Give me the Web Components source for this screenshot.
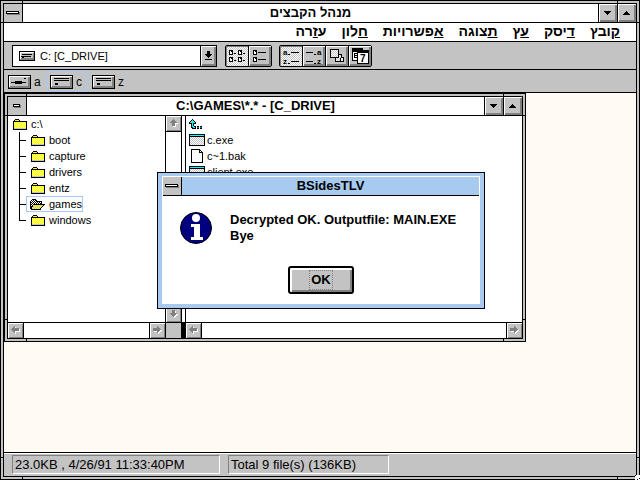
<!DOCTYPE html>
<html lang="he">
<head>
<meta charset="utf-8">
<title>מנהל הקבצים</title>
<style>
  html, body { margin: 0; height: 100%; overflow: hidden; }
  body {
    --face: #c3c3c3; --shade: #808080; --light: #fff; --accent: #a6caf0; --desk: #fffaf3;
    font: 11px/16px "Liberation Sans", Arial, sans-serif; color: #000; background: #fff;
  }
</style>
</head>
<body>
<file-manager></file-manager>
<script>
const PALETTE = { '#': '#000', Y: '#ff0', L: '#ffff80', W: '#fff', g: '#c3c3c3', s: '#808080', c: '#0ff', n: '#000080', t: '#008080', _: 'none' };
const folderFill = (a, b) => '#' + (a + b).repeat(6) + '#';
const ART = {
  folder: ['', '..####', '.#YYYY#', '##############', folderFill('L', 'Y'), folderFill('Y', 'L'), folderFill('L', 'Y'),
    folderFill('Y', 'L'), folderFill('L', 'Y'), folderFill('Y', 'L'), '#gggggggggggg#', '##############'],
  openFolder: ['', '..####', '.#W#W##', '#W#W#W######', '##W#W#W#W#W#', '#W#W#W#W#W##', '##W############', '#W#YgYgYgYgYg#',
    '###gYgYgYgYg#', '##YgYgYgYgY#', '##gYgYgYgY#', '.##########'],
  app: ['################', '#cccccccccccccc#', '################', '#WgWgWgWgWgWgWg#', '#gWgWgWgWgWgWgW#', '#WgWgWgWgWgWgWg#',
    '#gWgWgWgWgWgWgW#', '#WgWgWgWgWgWgWg#', '#gWgWgWgWgWgWgW#', '#WgWgWgWgWgWgWg#', '#gWgWgWgWgWgWgW#', '################'],
  page: ['#########', '#WWWWWWW##', '#WWWWWWW#W#', '#WWWWWWW####', '#WWWWWWWWWW#', '#WWWWWWWWWW#', '#WWWWWWWWWW#', '#WWWWWWWWWW#',
    '#WWWWWWWWWW#', '#WWWWWWWWWW#', '#WWWWWWWWWW#', '#WWWWWWWWWW#', '#WWWWWWWWWW#', '############'],
  up: ['...#', '..#c#', '.#ccc#', '#ccccc#', '###c###', '..#c#', '..#c#', '..#cc##.##.##', '..##cc#.tt.tt', '...####.##.##'],
  disk: ['################', '#WWWWWWWWWWWWWW#', '#Wggggggggggggs#', '#Wg##########gs#', '#Wggggggggggggs#', '#W##########ggs#', '#Wg##gggggggggs#', '#Wsssssssssssss#', '#ssssssssssssss#', '################'],
  hard: ['#######################', '#WWWWWWWWWWWWWWWWWWWWW#', '#Wggggggggggggggggggss#', '#Wgg###############gss#', '#Wggggggggggggggggggss#',
    '#Wgg###############gss#', '#Wggggggggggggggggggss#', '#Wggggggggggggggggggss#', '#Wggg###ggggggggggggss#', '#Wggg###ggggggggggggss#',
    '#Wggggggggggggggggggss#', '#Wssssssssssssssssssss#', '#sssssssssssssssssssss#', '#######################'],
  floppy: ['#######################', '#WWWWWWWWWWWWWWWWWWWWW#', '#Wggggggggggggggggggss#', '#Wgggggggggggggg##ggss#', '#Wggggggggggggggggggss#',
    '#Wggggggggggggggggggss#', '#Wggggg#######ggggggss#', '#Wg###############ggss#', '#Wggggg#######ggggggss#', '#Wggggggggggggggggggss#',
    '#Wggggggggggggggggggss#', '#Wssssssssssssssssssss#', '#sssssssssssssssssssss#', '#######################'],
  wideBar: ['#############', '#WWWWWWWWWWW#s', '#############s', '.sssssssssssss'],
  shortBar: ['#######', '#WWWWW#s', '#######s', '.sssssss'],
  down: ['#######_', '.#####', '..###', '...#'],
  upTri: ['...#', '..###', '.#####', '#######_'],
  drop: ['..###', '..###', '..###', '#######', '.#####', '..###', '...#', '', '#######', ''],
  names: ['####.....####', '#W##.....#W##', '#WW#.....#WW#', '#WW#.##..#WW#.##', '####.....####', '', '', '####.....####', '#W##.....#W##', '#WW#.....#WW#', '#WW#.##..#WW#.##', '####.....####'],
  details: ['####', '#W##', '#WW#.########_', '#WW#', '####', '', '', '####', '#W##', '#WW#.########', '#WW#', '####'],
  squares: ['#########', '#WgWgWgW#', '#gWgWgWg#', '#WgWgWgW#', '#gWgWgWg#', '#WgWgWgW####', '#gWgWgWg#Wg#', '#WgWgWgW#gW#', '#########Wg###',
    '.....#WgWg#WW#', '.....#gWgW#WW#', '.....#WgWg#WW#', '.....#########', ''],
  arrowLeft: ['...s', '..ssW', '.sssssss_', 'ssssssssW', '.sssssssW', '..ssWWWWW', '...sW', '....W', ''],
  arrowRight: ['....s', '....ss', 'sssssss__', 'ssssssss', 'sssssssWW', '.WWWssWW', '....sWW', '.....W', ''],
  arrowUp: ['....s', '...sss', '..sssss', '.sssssss_', '...sssWWW', '...sssW', '...sssW', '....WWW', ''],
  arrowDown: ['...sss', '...sssW', '...sssW', '.sssssss_', '..sssssWW', '...sssWW', '....sWW', '.....W', ''],
};

function define(name, html, setup) {
  const tpl = document.createElement('template');
  tpl.innerHTML = html;
  customElements.define(name, class extends HTMLElement {
    constructor() {
      super();
      this.attachShadow({ mode: 'open' }).append(tpl.content.cloneNode(true));
    }
    connectedCallback() { if (setup) setup(this, this.shadowRoot); }
  });
}

/* Small icon painted cell by cell from the ART table. */
define('pixel-icon', `<style>:host{display:block;flex:none}svg{display:block}</style>`, (el, root) => {
  const rows = ART[el.getAttribute('name')];
  const w = Math.max(...rows.map(r => r.length));
  let out = '';
  rows.forEach((row, y) => {
    for (const m of row.matchAll(/([^.])\1*/g))
      out += `<rect x="${m.index}" y="${y}" width="${m[0].length}" height="1" fill="${PALETTE[m[1]]}"/>`;
  });
  const box = document.createElement('div');
  box.innerHTML = `<svg width="${w}" height="${rows.length}" shape-rendering="crispEdges" aria-hidden="true">${out}</svg>`;
  root.append(box);
});

/* Resizable window frame with corner notches. */
define('window-frame', `<style>
  :host{display:block;box-sizing:border-box;border:1px solid #000;padding:2px;
    background:linear-gradient(#000,#000) 0 21px/100% 1px no-repeat,
      linear-gradient(#000,#000) 0 calc(100% - 21px)/100% 1px no-repeat,
      linear-gradient(#000,#000) 21px 0/1px 100% no-repeat,
      linear-gradient(#000,#000) calc(100% - 21px) 0/1px 100% no-repeat, var(--face)}
  .in{display:flex;flex-direction:column;box-sizing:border-box;height:100%;border:1px solid #000;background:#fff}
</style><div class="in"><slot></slot></div>`);

define('bevel-button', `<style>
  :host{display:block;box-sizing:border-box;flex:none}
  button{display:grid;place-items:center;width:100%;height:100%;padding:0;border:0;font:inherit;color:inherit;background:var(--face);
    box-shadow:inset 1px 1px var(--light),inset -1px -1px var(--shade),inset -2px -2px var(--edge,var(--shade))}
  :host([flat]) button{box-shadow:none}
  :host([thin]){--edge:transparent}
  :host([pressed]) button{box-shadow:inset 1px 1px var(--shade);
    background:repeating-conic-gradient(#fff 0 25%,var(--face) 0 50%) 0 0/2px 2px}
</style><button type="button"><slot></slot></button>`, (el, root) => {
  root.querySelector('button').setAttribute('aria-label', el.getAttribute('label') || '');
});

define('title-bar', `<style>
  :host{display:flex;flex:none;height:18px;border-bottom:1px solid #000;background:var(--caption,#fff);font-size:13px;line-height:18px;font-weight:bold}
  bevel-button{width:18px}
  .menu{width:19px;border-right:1px solid #000}
  .sized{width:19px;border-left:1px solid #000}
  h1{flex:1;margin:0;font:inherit;text-align:center;white-space:nowrap}
  :host([dialog]) .sized{display:none}
</style>
<bevel-button class="menu" flat label="Control menu"><slot name="mark"></slot></bevel-button>
<h1><slot></slot></h1>
<bevel-button class="sized" label="Minimize"><pixel-icon name="down"></pixel-icon></bevel-button>
<bevel-button class="sized" label="Maximize"><pixel-icon name="upTri"></pixel-icon></bevel-button>`);

define('menu-bar', `<style>
  :host{display:block;flex:none;border-bottom:1px solid #000;background:#fff}
  nav{display:flex;align-items:flex-start;direction:rtl;gap:15px;height:18px;padding:0 16px}
  button{border:0;padding:0;background:none;font:bold 14px/16px "Liberation Sans",Arial,sans-serif;color:inherit}
</style>
<nav><button><u>ק</u>ובץ</button><button><u>ד</u>יסק</button><button><u>ע</u>ץ</button><button><u>ת</u>צוגה</button><button><u>א</u>פשרויות</button><button><u>ח</u>לון</button><button>ע<u>ז</u>רה</button></nav>`);

define('tool-bar', `<style>
  :host{display:flex;flex:none;align-items:center;height:27px;padding:0 8px;border-bottom:1px solid #000;background:var(--face)}
  .combo{display:flex;align-items:center;box-sizing:border-box;width:205px;height:22px;border:1px solid #000;background:#fff;padding-left:6px;margin-right:8px}
  select{flex:1;min-width:0;appearance:none;border:0;padding:0 0 0 5px;background:none;font:11px/18px "Liberation Sans",Arial,sans-serif;color:inherit;height:20px}
  .combo bevel-button{width:16px;height:20px;border-left:1px solid #000}
  .group{display:flex;border:1px solid #000;border-radius:2px;margin-right:7px}
  .group bevel-button{width:22px;height:20px}
  .group bevel-button + bevel-button{width:23px;border-left:1px solid #000}
  svg{display:block}
  text{font:bold 8px "Liberation Sans",Arial,sans-serif}
</style>
<div class="combo"><pixel-icon name="disk"></pixel-icon>
  <select aria-label="Drive"><option>C: [C_DRIVE]</option></select>
  <bevel-button label="Open drive list"><pixel-icon name="drop"></pixel-icon></bevel-button></div>
<div class="group">
  <bevel-button pressed label="Names"><pixel-icon name="names"></pixel-icon></bevel-button>
  <bevel-button label="Details"><pixel-icon name="details"></pixel-icon></bevel-button></div>
<div class="group">
  <bevel-button pressed label="Sort by name"><svg width="16" height="20"><text x="0" y="9">a</text><text x="0" y="18">z</text><path d="M5 8h2v1h-2zM8 6h8v1h-8zM5 17h2v1h-2zM8 15h8v1h-8z"/></svg></bevel-button>
  <bevel-button label="Sort by type"><svg width="16" height="20"><text x="11" y="9">a</text><text x="11" y="18">z</text><path d="M0 6h7v1h-7zM8 8h2v1h-2zM0 15h7v1h-7zM8 17h2v1h-2z"/></svg></bevel-button>
  <bevel-button label="Sort by size"><pixel-icon name="squares"></pixel-icon></bevel-button>
  <bevel-button label="Sort by date"><svg width="17" height="16" shape-rendering="crispEdges"><path d="M0 0h11v13H0z"/><path d="M1 4h5v8H1z" fill="#fff"/><path d="M2 5h3v1H3v1h2v1H3v1h2v1H2z"/><path d="M5 2h12v14H5z"/><path d="M6 5h10v10H6z" fill="#fff"/><text x="8" y="14" style="font-size:10px;font-weight:bold">7</text></svg></bevel-button></div>`);

define('drive-bar', `<style>
  :host{display:flex;flex:none;height:22px;border-bottom:1px solid #000;background:var(--face);padding-left:1px}
  button{display:flex;align-items:center;gap:3px;box-sizing:border-box;height:21px;width:42px;margin-top:1px;padding:0 2px;border:1px solid transparent;background:none;font:12px/16px "Liberation Sans",Arial,sans-serif;color:inherit}
  button.on{width:41px;margin-right:1px;border-color:var(--accent)}
</style>
<button><pixel-icon name="floppy"></pixel-icon>a</button><button class="on"><pixel-icon name="hard"></pixel-icon>c</button><button><pixel-icon name="hard"></pixel-icon>z</button>`);

define('scroll-bar', `<style>
  :host{display:flex;justify-content:space-between;background:#fff}
  :host([vertical]){flex-direction:column}
  bevel-button{width:16px;height:15px}
  .a{border-right:1px solid #000}.b{border-left:1px solid #000}
  :host([vertical]) bevel-button{width:15px;height:16px;border:0 solid #000}
  :host([vertical]) .a{border-bottom-width:1px}
  :host([vertical]) .b{border-top-width:1px}
</style><bevel-button thin class="a" label="Scroll back"></bevel-button><bevel-button thin class="b" label="Scroll forward"></bevel-button>`,
(el, root) => {
  const names = el.hasAttribute('vertical') ? ['arrowUp', 'arrowDown'] : ['arrowLeft', 'arrowRight'];
  root.querySelectorAll('bevel-button').forEach((b, i) => { b.innerHTML = `<pixel-icon name="${names[i]}"></pixel-icon>`; });
});

define('folder-tree', `<style>
  :host{display:block;overflow:hidden;padding:0 0 0 5px}
  ul{list-style:none;margin:0;padding:0 0 0 6px}
  .row{display:flex;align-items:center;height:16px}
  .row pixel-icon{width:15px}
  .name{padding-left:3px}
  li{display:flex;align-items:center;height:16px;
    background:linear-gradient(#000,#000) 0 0/1px 100% no-repeat,linear-gradient(#000,#000) 0 8px/7px 1px no-repeat}
  li:last-child{background-size:1px 8px,7px 1px}
  li .row{box-sizing:border-box;margin-left:7px;padding-left:4px;border:1px solid transparent}
  li .on{border-color:var(--accent)}
  li .on pixel-icon{margin-left:-1px;padding-right:1px}
</style>
<div class="row"><pixel-icon name="folder"></pixel-icon><span class="name">c:\\</span></div>
<ul>${['boot', 'capture', 'drivers', 'entz', 'games', 'windows'].map(n => `<li><div class="row${n === 'games' ? ' on' : ''}"><pixel-icon name="${n === 'games' ? 'openFolder' : 'folder'}"></pixel-icon><span class="name">${n}</span></div></li>`).join('')}</ul>`);

define('file-list', `<style>
  :host{display:block;overflow:hidden;padding:0 0 0 3px}
  ul{list-style:none;margin:0;padding:0}
  li{display:flex;align-items:center;height:16px}
  .icon{display:grid;justify-content:center;width:16px}
  li:first-child .icon{justify-content:start}
  .name{padding-left:2px}
</style>
<ul><li><span class="icon"><pixel-icon name="up"></pixel-icon></span></li>
<li><span class="icon"><pixel-icon name="app"></pixel-icon></span><span class="name">c.exe</span></li>
<li><span class="icon"><pixel-icon name="page"></pixel-icon></span><span class="name">c~1.bak</span></li>
<li><span class="icon"><pixel-icon name="app"></pixel-icon></span><span class="name">client.exe</span></li></ul>`);

define('directory-panes', `<style>
  :host{display:grid;flex:1;min-height:0;grid-template:1fr 16px / 157px 16px 5px 1fr}
  .v{border-left:1px solid #000}
  .split{border:solid #000;border-width:0 1px}
  .h,.corner,.knob{border-top:1px solid #000}
  .corner{border-left:1px solid #000;background:var(--face)}
  .knob{background:#000}
</style>
<folder-tree></folder-tree><scroll-bar class="v" vertical></scroll-bar><div class="split"></div><file-list></file-list>
<scroll-bar class="h"></scroll-bar><div class="corner"></div><div class="knob"></div><scroll-bar class="h"></scroll-bar>`);

define('status-bar', `<style>
  :host{display:flex;flex:none;gap:8px;padding:1px 8px 2px;border-top:1px solid #000;box-shadow:inset 0 1px #fff;background:var(--face);font-size:13px}
  output{box-sizing:border-box;height:19px;margin-top:1px;padding:0 2px;line-height:17px;border:1px solid;border-color:var(--shade) #fff #fff var(--shade);white-space:nowrap}
  .file{width:208px}.total{width:161px}
</style><output class="file">23.0KB , 4/26/91 11:33:40PM</output><output class="total">Total 9 file(s) (136KB)</output>`);

define('message-box', `<style>
  :host{display:block;box-sizing:border-box;border:1px solid #000;padding:3px 4px 4px;background:var(--accent);font-weight:bold;font-size:13px}
  .in{background:#fff;height:100%;box-sizing:border-box;padding:1px 1px 0}
  title-bar{--caption:var(--accent)}
  .body{display:flex;gap:18px;padding:16px 17px 0}
  p{margin:0;line-height:16px}
  .foot{display:flex;justify-content:center;padding-top:22px}
  button{width:66px;height:28px;padding:0;border:2px solid #000;border-radius:3px;background:var(--face);color:inherit;font:inherit;
    box-shadow:inset 2px 2px #fff,inset -2px -2px var(--shade)}
  button span{display:inline-block;padding:0 1px;line-height:18px;border:1px dotted var(--shade)}
</style>
<div class="in" role="alertdialog" aria-label="BSidesTLV">
<title-bar dialog><pixel-icon slot="mark" name="wideBar"></pixel-icon>BSidesTLV</title-bar>
<div class="body">
<svg width="32" height="32" aria-hidden="true"><circle cx="16" cy="16" r="15.5" fill="#000080" stroke="#000"/><circle cx="16" cy="6" r="4" fill="#fff"/><path d="M11 12h9v13h3v3H11v-3h3V15h-3z" fill="#fff"/></svg>
<p>Decrypted OK. Outputfile: MAIN.EXE<br>Bye</p></div>
<div class="foot"><button type="button"><span>OK</span></button></div></div>`);

define('file-manager', `<style>
  :host{display:block;height:100vh;position:relative}
  .main{height:100%}
  .desk{flex:1;min-height:0;position:relative;background:var(--desk)}
  .child{position:absolute;left:0;top:0;width:522px;height:249px}
  message-box{position:absolute;left:157px;top:172px;width:328px;height:137px}
  .pointer{position:absolute;right:0;bottom:0;display:block}
</style>
<window-frame class="main">
  <title-bar><pixel-icon slot="mark" name="wideBar"></pixel-icon>מנהל הקבצים</title-bar>
  <menu-bar></menu-bar><tool-bar></tool-bar><drive-bar></drive-bar>
  <div class="desk"><window-frame class="child">
    <title-bar><pixel-icon slot="mark" name="shortBar"></pixel-icon>C:\\GAMES\\*.* - [C_DRIVE]</title-bar>
    <directory-panes></directory-panes></window-frame></div>
  <status-bar></status-bar>
</window-frame>
<message-box></message-box>
<svg class="pointer" width="5" height="5" shape-rendering="crispEdges" aria-hidden="true"><path d="M0 0h5v5H0z" fill="#fff"/><path d="M0 0h1v1H0zM4 3h1v1H4zM2 4h1v1H2z"/></svg>`);
</script>
</body>
</html>
